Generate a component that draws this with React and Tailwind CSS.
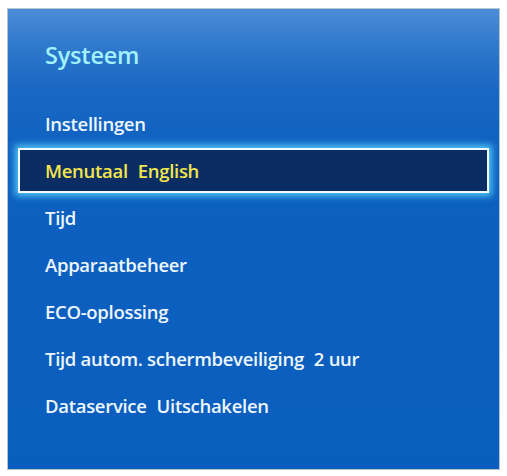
const ITEMS = [
  { label: "Instellingen" },
  { label: "Menutaal", value: "English", selected: true },
  { label: "Tijd" },
  { label: "Apparaatbeheer" },
  { label: "ECO-oplossing" },
  { label: "Tijd autom. schermbeveiliging", value: "2 uur" },
  { label: "Dataservice", value: "Uitschakelen" },
];

function MenuRow({ item }) {
  if (item.selected) {
    return (
      <div className="flex h-[45px] my-[1px] items-center gap-[10px] border-2 border-[#f4fbff] bg-[#0b2d63] pl-[25px] text-[#f3e64c] shadow-[0_0_7px_3px_rgba(90,210,255,0.9)]">
        <span>{item.label}</span>
        {item.value && <span>{item.value}</span>}
      </div>
    );
  }
  return (
    <div className="flex h-[47px] items-center gap-[10px] pl-[27px] text-[#eef7ff]">
      <span>{item.label}</span>
      {item.value && <span>{item.value}</span>}
    </div>
  );
}

export default function App() {
  return (
    <div
      className="h-[476px] w-[507px] bg-white pl-[7px] pt-[8px]"
      style={{ fontFamily: '"Open Sans", "Noto Sans", sans-serif' }}
    >
      <div className="h-[462px] w-[493px] border border-[#b9c3cc] bg-[linear-gradient(180deg,#4b8cd7_0%,#3079cc_8%,#1867c3_18%,#0d60bf_35%,#0a5ebd_100%)]">
        <div className="pl-[37px] pt-[29px] text-[23.5px] font-semibold tracking-[-0.2px] text-[#a2f1ff]">
          Systeem
        </div>
        <div className="mt-[27px] px-[10px] text-[18.5px] font-semibold tracking-[-0.3px]">
          {ITEMS.map((item) => (
            <MenuRow key={item.label} item={item} />
          ))}
        </div>
      </div>
    </div>
  );
}
